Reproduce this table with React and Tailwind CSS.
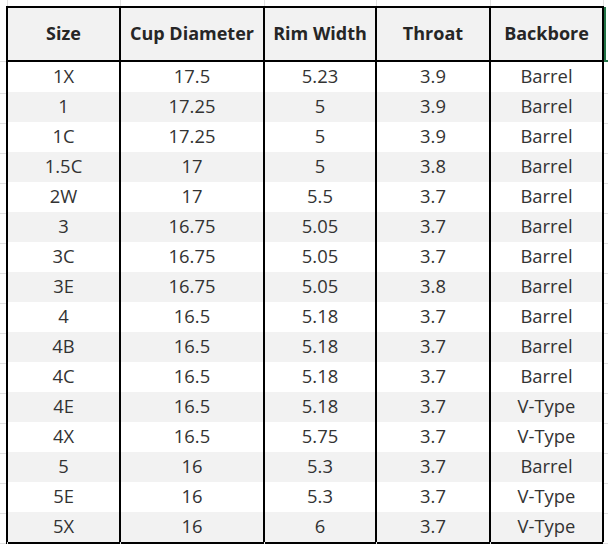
const ROWS = [
  ["1X", "17.5", "5.23", "3.9", "Barrel"],
  ["1", "17.25", "5", "3.9", "Barrel"],
  ["1C", "17.25", "5", "3.9", "Barrel"],
  ["1.5C", "17", "5", "3.8", "Barrel"],
  ["2W", "17", "5.5", "3.7", "Barrel"],
  ["3", "16.75", "5.05", "3.7", "Barrel"],
  ["3C", "16.75", "5.05", "3.7", "Barrel"],
  ["3E", "16.75", "5.05", "3.8", "Barrel"],
  ["4", "16.5", "5.18", "3.7", "Barrel"],
  ["4B", "16.5", "5.18", "3.7", "Barrel"],
  ["4C", "16.5", "5.18", "3.7", "Barrel"],
  ["4E", "16.5", "5.18", "3.7", "V-Type"],
  ["4X", "16.5", "5.75", "3.7", "V-Type"],
  ["5", "16", "5.3", "3.7", "Barrel"],
  ["5E", "16", "5.3", "3.7", "V-Type"],
  ["5X", "16", "6", "3.7", "V-Type"],
];

const HEADERS = ["Size", "Cup Diameter", "Rim Width", "Throat", "Backbore"];

const tableCols = "grid grid-cols-[6px_115px_144px_112px_114px_113px_1fr]";
const edgeCols = "grid grid-cols-[7px_113px_144px_112px_114px_113px_1fr]";

function EdgeRow({ height }) {
  return (
    <div className={`${edgeCols} ${height}`}>
      <div />
      {[0, 1, 2, 3, 4, 5].map((i) => (
        <div key={i} className="border-l border-[#e1e1e1]" />
      ))}
    </div>
  );
}

export default function App() {
  return (
    <div
      className="w-[608px] h-[544px] overflow-hidden bg-white text-[18.4px] text-[#333]"
      style={{ fontFamily: '"Open Sans", "Liberation Sans", sans-serif' }}
    >
      <EdgeRow height="h-[6px]" />

      <div className={`${tableCols} h-[56px]`}>
        <div className="border-b border-[#e1e1e1]" />
        {HEADERS.map((h, i) => (
          <div
            key={h}
            className={`flex items-center justify-center border-y-2 border-r-2 border-black bg-[#f2f2f2] pb-[2px] text-[18px] font-bold text-[#262626] ${i === 0 ? "border-l-2" : ""}`}
          >
            {h}
          </div>
        ))}
        <div className="mt-[1px] border-b-2 border-l-2 border-[#217346]" />
      </div>

      {ROWS.map((row, r) => (
        <div key={r} className={`${tableCols} h-[30px]`}>
          <div className="border-b border-[#e1e1e1]" />
          {row.map((v, i) => (
            <div
              key={i}
              className={`flex items-center justify-center border-b-2 border-r-2 border-black pb-[2px] ${r % 2 ? "bg-[#f2f2f2]" : "bg-white"} ${i === 0 ? "border-l-2" : ""}`}
            >
              {v}
            </div>
          ))}
          <div className="border-b border-[#e1e1e1]" />
        </div>
      ))}

      <EdgeRow height="h-[4px]" />
    </div>
  );
}
